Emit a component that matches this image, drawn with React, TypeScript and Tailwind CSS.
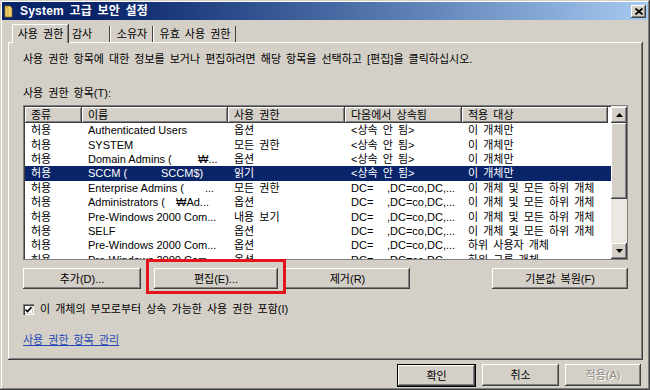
import React from "react";

const raised =
  "shadow-[inset_-1px_-1px_0_#404040,inset_1px_1px_0_#ffffff,inset_-2px_-2px_0_#808080,inset_2px_2px_0_#d4d0c8]";

type Split = { l: string; lw: string; r: string };

const rows: {
  kind: string;
  name: string | Split;
  perm: string;
  from: string | Split;
  target: string;
  sel?: boolean;
}[] = [
  { kind: "허용", name: "Authenticated Users", perm: "옵션", from: "<상속 안 됨>", target: "이 개체만" },
  { kind: "허용", name: "SYSTEM", perm: "모든 권한", from: "<상속 안 됨>", target: "이 개체만" },
  { kind: "허용", name: { l: "Domain Admins (", lw: "w-[110px]", r: "₩..." }, perm: "옵션", from: "<상속 안 됨>", target: "이 개체만" },
  { kind: "허용", name: { l: "SCCM (", lw: "w-[73px]", r: "SCCM$)" }, perm: "읽기", from: "<상속 안 됨>", target: "이 개체만", sel: true },
  { kind: "허용", name: { l: "Enterprise Admins (", lw: "w-[117px]", r: "..." }, perm: "모든 권한", from: { l: "DC=", lw: "w-[36px]", r: ",DC=co,DC,..." }, target: "이 개체 및 모든 하위 개체" },
  { kind: "허용", name: { l: "Administrators (", lw: "w-[88px]", r: "₩Ad..." }, perm: "옵션", from: { l: "DC=", lw: "w-[36px]", r: ",DC=co,DC,..." }, target: "이 개체 및 모든 하위 개체" },
  { kind: "허용", name: "Pre-Windows 2000 Com...", perm: "내용 보기", from: { l: "DC=", lw: "w-[36px]", r: ",DC=co,DC,..." }, target: "이 개체 및 모든 하위 개체" },
  { kind: "허용", name: "SELF", perm: "옵션", from: { l: "DC=", lw: "w-[36px]", r: ",DC=co,DC,..." }, target: "이 개체 및 모든 하위 개체" },
  { kind: "허용", name: "Pre-Windows 2000 Com...", perm: "옵션", from: { l: "DC=", lw: "w-[36px]", r: ",DC=co,DC,..." }, target: "하위 사용자 개체" },
  { kind: "허용", name: "Pre-Windows 2000 Com...", perm: "옵션", from: { l: "DC=", lw: "w-[36px]", r: ",DC=co,DC,..." }, target: "하위 그룹 개체" },
];

const cols = ["w-[57px]", "w-[146px]", "w-[117px]", "w-[117px]", "w-[146px]"];
const heads = ["종류", "이름", "사용 권한", "다음에서 상속됨", "적용 대상"];

function Cell({ v }: { v: string | Split }) {
  if (typeof v === "string") return <span className="whitespace-pre">{v}</span>;
  return (
    <span className="flex whitespace-pre">
      <span className={`inline-block ${v.lw}`}>{v.l}</span>
      <span>{v.r}</span>
    </span>
  );
}

function Arrow({ up }: { up?: boolean }) {
  return (
    <svg width="7" height="4" viewBox="0 0 7 4">
      <path d={up ? "M3.5 0L7 4H0z" : "M0 0h7L3.5 4z"} fill="#000" />
    </svg>
  );
}

function Btn({ children, className = "", dim }: { children: React.ReactNode; className?: string; dim?: boolean }) {
  return (
    <div
      className={`flex h-[21px] items-center justify-center bg-[#d4d0c8] ${raised} ${dim ? "text-[#8d8a85] [text-shadow:1px_1px_0_#fff]" : "text-black"} ${className}`}
    >
      {children}
    </div>
  );
}

export default function App() {
  return (
    <div className="h-[390px] w-[650px] overflow-hidden bg-[#d4d0c8] p-[2px] font-['Liberation_Sans','Noto_Sans_CJK_KR',sans-serif] text-[11px] leading-[14px] text-black [word-spacing:2px] shadow-[inset_-1px_-1px_0_#404040,inset_1px_1px_0_#d4d0c8,inset_-2px_-2px_0_#808080,inset_2px_2px_0_#ffffff]">
      {/* Title bar */}
      <div className="flex h-[18px] items-center bg-linear-to-r from-[#0a246a] from-15% to-[#a6caf0] pl-[2px] pr-[2px]">
        <svg width="9" height="13" viewBox="0 0 9 13" className="mr-[7px]">
          <path d="M1 1h5l2 2v9H1z" fill="#f3d36b" stroke="#8a6d1c" strokeWidth="0.8" />
          <path d="M1 1l3 2v9" fill="none" stroke="#c9a13a" strokeWidth="1" />
        </svg>
        <span className="text-[12px] font-bold tracking-[0.2px] text-white">System 고급 보안 설정</span>
        <div className={`ml-auto flex h-[13px] w-[15px] items-center justify-center bg-[#d4d0c8] ${raised}`}>
          <svg width="8" height="7" viewBox="0 0 8 7">
            <path d="M0.5 0.5L7.5 6.5M7.5 0.5L0.5 6.5" stroke="#000" strokeWidth="1.8" />
          </svg>
        </div>
      </div>

      {/* Tabs */}
      <div className="mt-[3px] flex h-[19px] items-end pl-[10px]">
        <div className="z-10 -mb-px flex h-[19px] w-[56px] items-center justify-center border-l border-t border-white bg-[#d4d0c8] shadow-[inset_-1px_0_0_#808080,1px_0_0_#404040]">
          사용 권한
        </div>
        <div className="ml-[1px] flex h-[16px] w-[41px] items-center pl-[3px] shadow-[inset_-1px_0_0_#404040]">감사</div>
        <div className="flex h-[16px] w-[43px] items-center justify-center border-l border-white shadow-[inset_-1px_0_0_#404040]">소유자</div>
        <div className="flex h-[16px] w-[83px] items-center justify-center border-l border-white shadow-[inset_-1px_0_0_#404040]">유효 사용 권한</div>
      </div>

      {/* Panel */}
      <div className="ml-[6px] mr-[5px] flex h-[318px] flex-col px-[15px] pt-[10px] shadow-[inset_-1px_-1px_0_#404040,inset_1px_1px_0_#ffffff,inset_-2px_-2px_0_#808080]">
        <div className="h-[14px]">
          사용 권한 항목에 대한 정보를 보거나 편집하려면 해당 항목을 선택하고 [편집]을 클릭하십시오.
        </div>
        <div className="mt-[20px] h-[14px]">사용 권한 항목(T):</div>

        {/* List */}
        <div className="mt-[5px] flex h-[155px] border border-[#808080] bg-white shadow-[inset_1px_1px_0_#404040]">
          <div className="flex min-w-0 flex-1 flex-col overflow-hidden pl-[1px] pt-[1px]">
            <div className="flex h-[16px] shrink-0">
              {heads.map((h, i) => (
                <div
                  key={h}
                  className={`${cols[i]} flex items-center bg-[#d4d0c8] pl-[6px] ${raised}`}
                >
                  {h}
                </div>
              ))}
            </div>
            {rows.map((r, idx) => (
              <div
                key={idx}
                className={`flex h-[14.4px] shrink-0 items-center ${r.sel ? "bg-[#0a246a] text-white" : ""}`}
              >
                <div className={`${cols[0]} pl-[6px]`}>{r.kind}</div>
                <div className={`${cols[1]} pl-[6px] [word-spacing:0]`}><Cell v={r.name} /></div>
                <div className={`${cols[2]} pl-[6px]`}>{r.perm}</div>
                <div className={`${cols[3]} pl-[6px]`}><Cell v={r.from} /></div>
                <div className={`${cols[4]} pl-[6px]`}>{r.target}</div>
              </div>
            ))}
          </div>
          {/* Scrollbar */}
          <div className="flex w-[16px] shrink-0 flex-col bg-[#ece9e4] pt-[1px]">
            <div className={`flex h-[16px] items-center justify-center bg-[#d4d0c8] ${raised}`}>
              <Arrow up />
            </div>
            <div className={`h-[76px] bg-[#d4d0c8] ${raised}`} />
            <div className="flex-1" />
            <div className={`flex h-[16px] items-center justify-center bg-[#d4d0c8] ${raised}`}>
              <Arrow />
            </div>
          </div>
        </div>

        {/* Buttons */}
        <div className="mt-[8px] flex">
          <Btn className="w-[118px]">추가(D)...</Btn>
          <div className="relative ml-[13px]">
            <Btn className="w-[124px]">편집(E)...</Btn>
            <div className="absolute -bottom-[5px] -left-[8px] -right-[8px] -top-[9px] border-[3px] border-[#e3141b]" />
          </div>
          <Btn className="ml-[7px] w-[125px]">제거(R)</Btn>
          <Btn className="ml-auto w-[136px]">기본값 복원(F)</Btn>
        </div>

        {/* Checkbox */}
        <div className="mt-[13px] flex h-[14px] items-center">
          <div className="flex h-[11px] w-[11px] items-center justify-center bg-white shadow-[inset_1px_1px_0_#808080,inset_2px_2px_0_#404040,inset_-1px_-1px_0_#ffffff,inset_-2px_-2px_0_#d4d0c8]">
            <svg width="7" height="7" viewBox="0 0 7 7">
              <path d="M0.5 3.5L2.5 5.5L6.5 1" fill="none" stroke="#000" strokeWidth="1.6" />
            </svg>
          </div>
          <span className="ml-[6px]">이 개체의 부모로부터 상속 가능한 사용 권한 포함(I)</span>
        </div>

        <div className="mt-[17px] h-[14px]">
          <span className="text-[#1f49b6] underline underline-offset-1">사용 권한 항목 관리</span>
        </div>
      </div>

      {/* Bottom buttons */}
      <div className="mt-[4px] flex justify-end gap-[6px] pr-[7px]">
        <div className="border border-black">
          <Btn className="h-[20px] w-[77px]">확인</Btn>
        </div>
        <Btn className="h-[22px] w-[77px]">취소</Btn>
        <Btn className="h-[22px] w-[76px]" dim>적용(A)</Btn>
      </div>
    </div>
  );
}
